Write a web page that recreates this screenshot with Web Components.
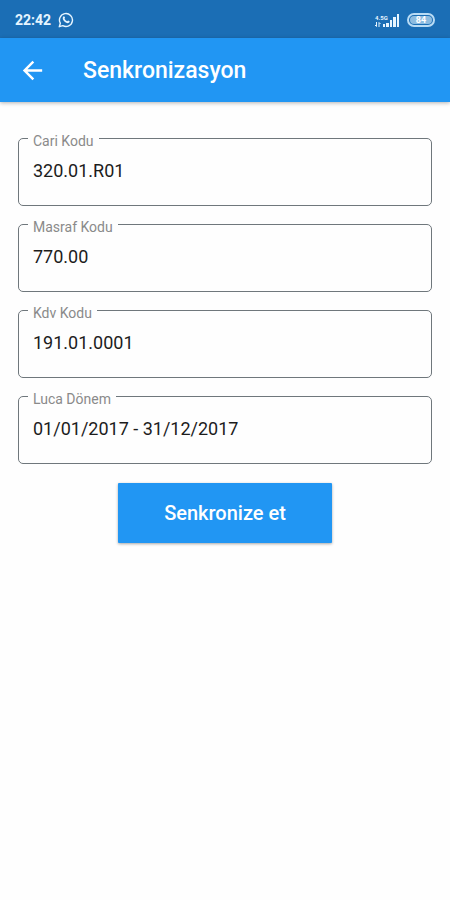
<!DOCTYPE html>
<html lang="tr">
<head>
<meta charset="utf-8">
<meta name="viewport" content="width=device-width, initial-scale=1">
<title>Senkronizasyon</title>
<style>
  body {
    margin: 0;
    background: #fefefe;
    font-family: Roboto, "Liberation Sans", sans-serif;
  }
</style>
</head>
<body>
<sync-page>
  <status-bar slot="top" time="22:42" network="4.5G" battery="84"></status-bar>
  <app-bar slot="top">Senkronizasyon</app-bar>
  <outlined-field label="Cari Kodu" value="320.01.R01"></outlined-field>
  <outlined-field label="Masraf Kodu" value="770.00"></outlined-field>
  <outlined-field label="Kdv Kodu" value="191.01.0001"></outlined-field>
  <outlined-field label="Luca Dönem" value="01/01/2017 - 31/12/2017"></outlined-field>
  <raised-button>Senkronize et</raised-button>
</sync-page>

<script>
'use strict';

class SyncPage extends HTMLElement {
  constructor() {
    super();
    this.attachShadow({ mode: 'open' }).innerHTML = `
      <style>
        :host {
          display: flex;
          flex-direction: column;
          min-height: 100vh;
        }
        main {
          display: flex;
          flex-direction: column;
          gap: 8px;
          padding: 26px 18px;
        }
      </style>
      <slot name="top"></slot>
      <main><slot></slot></main>
    `;
  }
}

class StatusBar extends HTMLElement {
  constructor() {
    super();
    this.attachShadow({ mode: 'open' }).innerHTML = `
      <style>
        :host {
          display: flex;
          align-items: center;
          justify-content: space-between;
          height: 38px;
          padding: 2px 15px 0;
          box-sizing: border-box;
          background: #1b6eb5;
          color: #e6f5ff;
        }
        div {
          display: flex;
          align-items: center;
          gap: 7px;
        }
        #time {
          font-size: 14px;
          font-weight: 700;
        }
        svg {
          display: block;
        }
        /* The network type sits above the arrows and the shortest bars. */
        .signal {
          display: grid;
          grid-template-columns: 7px 18px;
          grid-template-rows: 7px 6px;
          gap: 0;
        }
        #network {
          grid-area: 1 / 1 / 2 / 3;
          font-size: 6px;
          line-height: 7px;
          font-weight: 700;
        }
        .arrows {
          grid-area: 2 / 1 / 3 / 2;
        }
        .bars {
          grid-area: 1 / 2 / 3 / 3;
        }
        #battery {
          width: 22px;
          padding: 1px;
          border: 2px solid #b9dcf5;
          border-radius: 7px;
          background: #8dbce0 content-box;
          font-size: 9px;
          line-height: 8px;
          font-weight: 700;
          text-align: center;
          color: #fff;
        }
      </style>
      <div>
        <span id="time"></span>
        <svg width="16" height="16" viewBox="0 0 16 16" fill="none" stroke="currentColor">
          <path d="M1.3 14.7l1-3.5A6.5 6.5 0 1 1 4.8 13.7z" stroke-width="1.4" stroke-linejoin="round"/>
          <path d="M5.4 4.6c.7-.7 1.2-.3 1.7 1.2l-.6 1c.7 1.3 1.4 1.9 2.7 2.5l1-.8c1.5.7 1.7 1 1.4 1.6-.5 1-1.8 1.4-3.3.7C6.4 9.9 5.2 8.5 4.8 7c-.2-1 0-1.8.6-2.4z" fill="currentColor" stroke="none"/>
        </svg>
      </div>
      <div>
        <div class="signal">
          <span id="network"></span>
          <svg class="arrows" width="6" height="6" viewBox="0 0 6 6" fill="none" stroke="currentColor">
            <path d="M1.5 1v4.5M0 4l1.5 1.5M4 6V1.5M5.5 3L4 1.5"/>
          </svg>
          <svg class="bars" width="18" height="13" viewBox="0 0 18 13" fill="currentColor">
            <path d="M1 10h2v3H1zM4 9h3v4H4zM8 6h2v7H8zM11 3h3v10h-3zM15 0h2v13h-2z"/>
          </svg>
        </div>
        <span id="battery"></span>
      </div>
    `;
  }

  connectedCallback() {
    for (let name of ['time', 'network', 'battery'])
      this.shadowRoot.getElementById(name).textContent = this.getAttribute(name);
  }
}

class AppBar extends HTMLElement {
  constructor() {
    super();
    this.attachShadow({ mode: 'open' }).innerHTML = `
      <style>
        :host {
          display: flex;
          align-items: center;
          gap: 36px;
          height: 64px;
          padding: 0 18px;
          box-sizing: border-box;
          background: #2196f3;
          color: #fff;
          box-shadow: 0 1px 4px rgba(0, 0, 0, 0.3);
        }
        button {
          padding: 0;
          border: 0;
          background: none;
          color: inherit;
        }
        svg {
          display: block;
        }
        h1 {
          margin: 0;
          font-size: 23px;
          font-weight: 500;
        }
      </style>
      <button type="button" aria-label="Geri">
        <svg width="29" height="29" viewBox="0 0 24 24" fill="currentColor">
          <path d="M20 11H7.83l5.59-5.59L12 4l-8 8 8 8 1.41-1.41L7.83 13H20v-2z"/>
        </svg>
      </button>
      <h1><slot></slot></h1>
    `;
  }
}

// Text box with a thin outline that is broken by its label.
class OutlinedField extends HTMLElement {
  constructor() {
    super();
    this.attachShadow({ mode: 'open' }).innerHTML = `
      <style>
        :host {
          display: block;
        }
        fieldset {
          min-width: 0;
          margin: 0;
          padding: 0 5px 16px 9px;
          border: 1px solid #6f777c;
          border-radius: 5px;
        }
        legend {
          padding: 5px 5px 0;
          font-size: 14px;
          line-height: 16px;
          color: #8a8a8a;
        }
        label {
          display: block;
        }
        input {
          display: block;
          width: 100%;
          height: 40px;
          padding: 2px 5px 0;
          border: 0;
          box-sizing: border-box;
          outline: none;
          background: none;
          font-family: inherit;
          font-size: 18px;
          color: #1c1c1c;
        }
      </style>
      <fieldset>
        <legend><label for="input"></label></legend>
        <input id="input" type="text">
      </fieldset>
    `;
  }

  connectedCallback() {
    this.shadowRoot.querySelector('label').textContent = this.getAttribute('label');
    this.shadowRoot.getElementById('input').value = this.getAttribute('value');
  }
}

class RaisedButton extends HTMLElement {
  constructor() {
    super();
    this.attachShadow({ mode: 'open' }).innerHTML = `
      <style>
        :host {
          display: flex;
          justify-content: center;
          padding-top: 11px;
        }
        button {
          height: 60px;
          padding: 0 46px;
          border: 0;
          border-radius: 1px;
          background: #2196f3;
          box-shadow: 0 1px 3px rgba(0, 0, 0, 0.35);
          font-family: inherit;
          font-size: 20px;
          font-weight: 500;
          color: #fff;
        }
      </style>
      <button type="button"><slot></slot></button>
    `;
  }
}

window.customElements.define('sync-page', SyncPage);
window.customElements.define('status-bar', StatusBar);
window.customElements.define('app-bar', AppBar);
window.customElements.define('outlined-field', OutlinedField);
window.customElements.define('raised-button', RaisedButton);
</script>
</body>
</html>
